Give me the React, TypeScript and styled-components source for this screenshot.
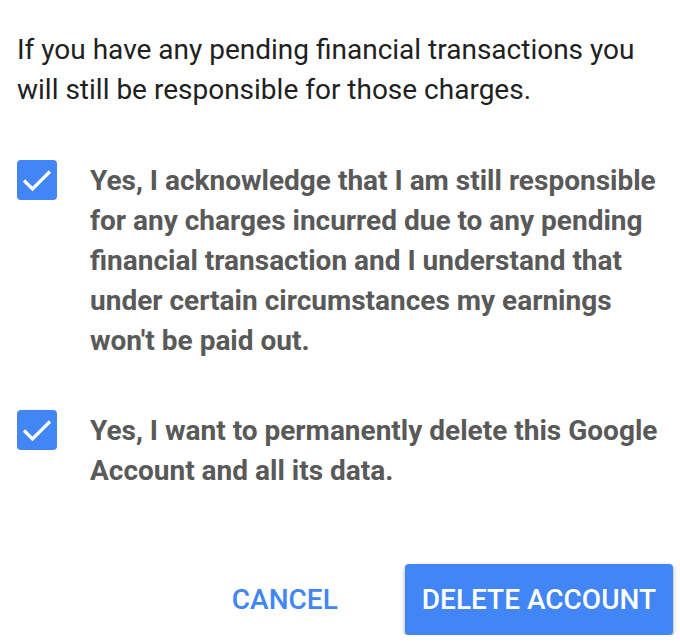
import React from "react";
import styled, { createGlobalStyle } from "styled-components";

const GlobalStyle = createGlobalStyle`
  body {
    margin: 0;
    background: #ffffff;
    font-family: Roboto, "Liberation Sans", sans-serif;
  }
`;

const Page = styled.div`
  display: flex;
  flex-direction: column;
  padding: 30px 7px 0 17px;
  width: 680px;
  box-sizing: border-box;
`;

const Intro = styled.p`
  margin: 0 10px 51px 0;
  font-size: 28px;
  line-height: 40px;
  color: #212121;
`;

const Option = styled.label`
  display: flex;
  align-items: flex-start;
  gap: 33px;
  margin-bottom: 50px;
`;

const Box = styled.span`
  flex: none;
  width: 40px;
  height: 40px;
  margin-top: -1px;
  border-radius: 4px;
  background: #4285f4;
  display: flex;
`;

const OptionText = styled.span`
  font-size: 28px;
  line-height: 40px;
  font-weight: 700;
  color: #595959;
  padding-right: 10px;
`;

const Actions = styled.div`
  display: flex;
  justify-content: flex-end;
  gap: 50px;
  margin-top: 23px;
`;

const Button = styled.button<{ $primary?: boolean }>`
  height: 71px;
  padding: 0 17px;
  border: none;
  border-radius: 4px;
  font-family: Roboto, "Liberation Sans", sans-serif;
  font-size: 28px;
  font-weight: 500;
  background: ${(p) => (p.$primary ? "#4285f4" : "transparent")};
  color: ${(p) => (p.$primary ? "#ffffff" : "#4285f4")};
  box-shadow: ${(p) =>
    p.$primary ? "0 2px 4px rgba(0,0,0,0.3), 0 1px 2px rgba(0,0,0,0.15)" : "none"};
`;

const Check = () => (
  <svg width="40" height="40" viewBox="0 0 40 40">
    <path d="M7 20.5 L15.5 29 L33 11.5" fill="none" stroke="#fff" strokeWidth="3.2" />
  </svg>
);

const options = [
  "Yes, I acknowledge that I am still responsible for any charges incurred due to any pending financial transaction and I understand that under certain circumstances my earnings won't be paid out.",
  "Yes, I want to permanently delete this Google Account and all its data.",
];

const App: React.FunctionComponent = () => (
  <>
    <GlobalStyle />
    <Page>
      <Intro>
        If you have any pending financial transactions you will still be responsible for those charges.
      </Intro>
      {options.map((text) => (
        <Option key={text}>
          <Box>
            <Check />
          </Box>
          <OptionText>{text}</OptionText>
        </Option>
      ))}
      <Actions>
        <Button>CANCEL</Button>
        <Button $primary>DELETE ACCOUNT</Button>
      </Actions>
    </Page>
  </>
);

export default App;
